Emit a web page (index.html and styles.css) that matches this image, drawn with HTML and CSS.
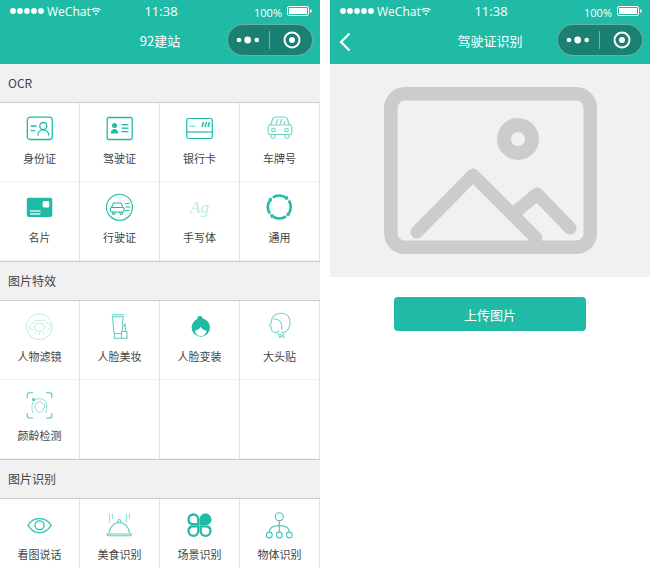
FILE: index.html
```html
<!DOCTYPE html>
<html lang="zh-CN">
<head>
<meta charset="UTF-8">
<title>92建站</title>
<link rel="stylesheet" href="styles.css">
</head>
<body>

<div class="phone">
    <div class="header">
        <div class="status">
            <div class="status-left">
                <svg class="signal" width="36" height="8" viewBox="0 0 36 8"><g fill="#fff"><circle cx="3" cy="4" r="2.9"/><circle cx="10" cy="4" r="2.9"/><circle cx="17" cy="4" r="2.9"/><circle cx="24" cy="4" r="2.9"/><circle cx="31" cy="4" r="2.9"/></g></svg>
                <span class="carrier">WeChat</span>
                <svg class="wifi" width="10" height="9" viewBox="0 0 11 9"><g fill="none" stroke="#fff" stroke-width="1.4"><path d="M.5 3C3.3.5 7.7.5 10.5 3"/><path d="M2.3 5C4 3.5 7 3.5 8.7 5"/></g><path d="M5.5 9 3.9 6.8C4.8 6.2 6.2 6.2 7.1 6.8z" fill="#fff"/></svg>
            </div>
            <span class="time">11:38</span>
            <div class="status-right">
                <span class="percent">100%</span>
                <svg width="25" height="10" viewBox="0 0 25 10"><rect x=".5" y=".5" width="21" height="9" rx="1.5" fill="none" stroke="#fff"/><rect x="2" y="2" width="18" height="6" fill="#fff"/><rect x="23" y="3.5" width="1.5" height="3" fill="#fff"/></svg>
            </div>
        </div>
        <div class="nav">
            <div></div>
            <div class="nav-title">92建站</div>
            <div class="capsule">
                <svg width="84" height="30" viewBox="0 0 84 30"><g fill="#fff"><circle cx="11" cy="15" r="2.3"/><circle cx="19.7" cy="15" r="3.4"/><circle cx="28.7" cy="15" r="2.3"/></g><path d="M41.5 6v18" stroke="#fff" stroke-opacity=".4"/><circle cx="64" cy="15" r="7.5" fill="none" stroke="#fff" stroke-width="2"/><circle cx="64" cy="15" r="3" fill="#fff"/></svg>
            </div>
        </div>
    </div>

    <div class="section-title">OCR</div>
    <div class="grid">
        <div class="cell">
            <svg class="icon" viewBox="0 0 30 30"><g fill="none" stroke="#1fbba6" stroke-width="1.3"><rect x="2.3" y="4.2" width="25" height="22.3" rx="3"/><circle cx="18.3" cy="13" r="3.5"/><path d="M12.8 22.5c.3-7.5 10.7-7.5 11 0"/><path d="M5.7 13h6M5.7 17.7h4.5"/></g></svg>
            <span class="label">身份证</span>
        </div>
        <div class="cell">
            <svg class="icon" viewBox="0 0 30 30"><rect x="2.2" y="4.5" width="25" height="22" rx="1.5" fill="none" stroke="#1fbba6" stroke-width="1.3"/><g fill="#1fbba6"><circle cx="9.5" cy="12.5" r="2.5"/><path d="M5.8 20.5c0-6 7.4-6 7.4 0z"/><rect x="16.5" y="11" width="7" height="1.3"/><rect x="16.5" y="14.5" width="7" height="1.3"/><rect x="16.5" y="18" width="7" height="1.3"/></g></svg>
            <span class="label">驾驶证</span>
        </div>
        <div class="cell">
            <svg class="icon" viewBox="0 0 30 30"><rect x="1.8" y="5.5" width="25.5" height="20" rx="1.5" fill="none" stroke="#1fbba6" stroke-width="1.2"/><path d="M2 19h25" stroke="#1fbba6" stroke-width="1.2"/><path d="M4.5 13.2h5.500" stroke="#1fbba6" stroke-dasharray="1.5 .6"/><path d="M17 14l1.5-5M20 14l1.5-5M23 14l1.5-5" stroke="#1fbba6" stroke-width="1.5"/></svg>
            <span class="label">银行卡</span>
        </div>
        <div class="cell">
            <svg class="icon" viewBox="0 0 30 30"><g fill="none" stroke="#6fd3c5" stroke-width="1.1"><path d="M5.5 12.5 7.5 6.5C8 5 9 4 10.7 4h8.600c1.700 0 2.700 1 3.200 2.500l2 6"/><path d="M5 12h20c1 0 1.800.8 1.800 1.800v6c0 1-.8 1.700-1.800 1.700H5c-1 0-1.800-.7-1.800-1.700v-6C3.200 12.800 4 12 5 12z"/><circle cx="8.5" cy="17" r="1.8"/><circle cx="21.5" cy="17" r="1.8"/><path d="M6 21.5v2c0 2.400 4 2.400 4 0v-2M20 21.5v2c0 2.400 4 2.400 4 0v-2"/><path d="M11 11l2-5M15 11l2-5M19 11l1-3"/></g></svg>
            <span class="label">车牌号</span>
        </div>
        <div class="cell">
            <svg class="icon" viewBox="0 0 30 30"><rect x="1.8" y="5.8" width="25.5" height="19.2" rx="2" fill="#1fbba6"/><rect x="17.7" y="9" width="6.6" height="6.4" rx="1.5" fill="#fff"/><path d="M5 19h10.5M5 22h10.5" stroke="#d5f2ed" stroke-width="1.3"/></svg>
            <span class="label">名片</span>
        </div>
        <div class="cell">
            <svg class="icon" viewBox="0 0 30 30"><g fill="none" stroke="#1fbba6" stroke-width="1.1"><circle cx="14.5" cy="15.3" r="13"/><path d="M6.5 15.5 8 12c.3-.7.8-1 1.500-1h5.500c.7 0 1.200.3 1.500 1l1.500 3.500"/><rect x="5.5" y="15.5" width="13.5" height="4.5" rx="1.2"/><path d="M7.5 20v1.500c0 1.200 2.500 1.200 2.500 0V20M15 20v1.500c0 1.200 2.500 1.200 2.500 0V20"/><path d="M20 11.5h4.500M20.500 15h5M20 18.500h4.500"/></g></svg>
            <span class="label">行驶证</span>
        </div>
        <div class="cell">
            <svg class="icon" viewBox="0 0 30 30"><text x="5" y="21" class="script">Ag</text></svg>
            <span class="label">手写体</span>
        </div>
        <div class="cell">
            <svg class="icon" viewBox="0 0 30 30"><circle cx="14.3" cy="15" r="11.5" fill="none" stroke="#1fbba6" stroke-width="2.6" stroke-dasharray="14.5 3.565" stroke-dashoffset="7.25"/><g fill="#1fbba6"><path d="M23.5 7.5 22.6 3.6 19.5 7.800z"/><path d="M23.5 7.5 22.6 3.6 19.5 7.800z" transform="rotate(90 14.3 15)"/><path d="M23.5 7.5 22.6 3.6 19.5 7.800z" transform="rotate(180 14.3 15)"/><path d="M23.5 7.5 22.6 3.6 19.5 7.800z" transform="rotate(270 14.3 15)"/></g></svg>
            <span class="label">通用</span>
        </div>
    </div>

    <div class="section-title">图片特效</div>
    <div class="grid">
        <div class="cell">
            <svg class="icon" viewBox="0 0 30 30"><g fill="none" stroke="#bfeae3" stroke-width="1"><circle cx="14.3" cy="15.7" r="13"/><path d="M8 19c-2.500 0-4-1.500-3.700-3.500.2-1.500 1.700-2.500 3-2.300C8 10.500 11 9 14 9.800c3-1.200 6-.2 7.500 2.500 2.200-.3 4 1 4 3 0 2-1.500 3.500-3.500 3.500"/><path d="M9 16c1-3 2.500-4 5.500-3.500 3-.5 5 1 5.500 3.500-.5 3-2.500 4.500-5.500 4.500S9.500 19 9 16z"/><path d="M10 21.500l1 2M14.500 21.500v2.500M19 21.500l-1 2"/></g></svg>
            <span class="label">人物滤镜</span>
        </div>
        <div class="cell">
            <svg class="icon" viewBox="0 0 30 30"><g fill="none" stroke="#5fcfbf" stroke-width="1.1"><path d="M6.8 3.8h12M6.8 5.8h12"/><path d="M7.5 5.8l2.200 21.400h7"/><path d="M18.2 5.8l-1 8"/><path d="M16.5 20.5h5.500v6.800h-5.500z"/><path d="M10 22.500h6.500"/><path d="M17.5 20.5v-5l2.500-2.500.7 7.500"/></g></svg>
            <span class="label">人脸美妆</span>
        </div>
        <div class="cell">
            <svg class="icon" viewBox="0 0 30 30"><circle cx="15" cy="7.5" r="2.6" fill="#1fbba6"/><circle cx="15.8" cy="16.5" r="9.2" fill="#1fbba6"/><path d="M10 19.500c2 0 4.200-1.200 5.700-3.500 1.300 2.300 3.500 3.500 5.700 3.500 0 3.300-2.500 5.700-5.700 5.700s-5.700-2.400-5.700-5.700z" fill="#fff"/></svg>
            <span class="label">人脸变装</span>
        </div>
        <div class="cell">
            <svg class="icon" viewBox="0 0 30 30"><g fill="none" stroke="#76d7c9" stroke-width="1.1"><path d="M7 7.5C9 3 14 1.500 18.500 2.500c4.500 1 6.500 5 6.500 9 0 4-1.500 7-4 9-1.500 1-3 1.200-4.500 1"/><path d="M7 7.5c-.5 1.500-.8 3-.8 4.500L4.500 15l1.800 1c0 3 1 5 3 5.500 2 .3 3.500-.5 4.500-1.500"/><path d="M8.5 8c2.500 0 6 1 7.500 3.500 1 2 1 5 .5 7.500"/><path d="M13 22l2 4.500 4.500-4"/><path d="M15 23l4.500 4"/></g></svg>
            <span class="label">大头贴</span>
        </div>
        <div class="cell">
            <svg class="icon" viewBox="0 0 30 30"><g fill="none" stroke="#4cc9b7" stroke-width="1.1"><path d="M2.2 8V5c0-1.300 1-2.300 2.300-2.300H8M21 2.700h3.500c1.300 0 2.300 1 2.300 2.300v3M26.800 23v3c0 1.300-1 2-2.300 2H21M8 28H4.500c-1.300 0-2.300-.7-2.300-2v-3"/></g><g fill="none" stroke="#8ce0d3" stroke-width="1"><path d="M8 23c-1-3-1.500-6-.7-9 .8-3 3.500-5.500 7-5.500 4 0 6.500 2.500 7.200 5.500.6 3 .2 6-.8 9"/><path d="M10 14c2-.5 4-1.500 5-3 1 2 3 3 4.500 3.500 0 3.500-1 7-5 8-3-.5-4.800-4-4.500-8.500z"/></g><circle cx="8.5" cy="9.5" r="1.5" fill="#4cc9b7"/></svg>
            <span class="label">颜龄检测</span>
        </div>
        <div class="cell"></div>
        <div class="cell"></div>
        <div class="cell"></div>
    </div>

    <div class="section-title">图片识别</div>
    <div class="grid">
        <div class="cell">
            <svg class="icon" viewBox="0 0 30 30"><g fill="none" stroke="#45c7b5" stroke-width="1.5"><path d="M3 16.300C6 11.500 10 9.500 14.500 9.500S23 11.500 26.200 16.300C23 21 19 23.800 14.500 23.800S6 21 3 16.300z"/><circle cx="14.5" cy="16.3" r="4.5"/></g></svg>
            <span class="label">看图说话</span>
        </div>
        <div class="cell">
            <svg class="icon" viewBox="0 0 30 30"><g fill="none" stroke="#5fcfbf" stroke-width="1.1"><path d="M4 24.500c.5-6.500 5-11 10.300-11s9.800 4.500 10.300 11"/><path d="M2 25h24.500c0 1-.5 1.700-1.500 1.700H3.500C2.500 26.700 2 26 2 25z"/><circle cx="14.3" cy="12" r="1.5"/></g><g fill="none" stroke="#8ce0d3" stroke-width="1.1"><path d="M4.500 4.500c-1.500 2 1.500 3.500 0 5.500s1 2.500 0 3.500M7.500 4.500c-1.500 2 1.500 3.500 0 5.500M21.500 4.500c-1.500 2 1.500 3.500 0 5.500s1 2.500 0 3.500M24.500 4.500c-1.500 2 1.500 3.500 0 5.500"/></g></svg>
            <span class="label">美食识别</span>
        </div>
        <div class="cell">
            <svg class="icon" viewBox="0 0 30 30"><g fill="none" stroke="#1fbba6" stroke-width="2.3"><path d="M13.300 15.100H8c-3 0-4.500-2-4.500-4.700s2.200-4.900 4.900-4.900 4.900 2.200 4.900 4.900z"/><path d="M13.300 17.300H8c-3 0-4.500 2-4.500 4.700s2.200 4.900 4.900 4.900 4.900-2.200 4.900-4.900z"/><path d="M15.700 17.300H21c3 0 4.500 2 4.500 4.700s-2.200 4.900-4.900 4.900-4.900-2.200-4.900-4.900z"/></g><path d="M14.500 16.100V10.400c0-3.300 2.700-6 6-6s6 2.700 6 6-2.700 5.700-6 5.700z" fill="#1fbba6"/></svg>
            <span class="label">场景识别</span>
        </div>
        <div class="cell">
            <svg class="icon" viewBox="0 0 30 30"><g fill="none" stroke="#45c7b5" stroke-width="1.1"><circle cx="14.3" cy="7.7" r="4"/><circle cx="4.3" cy="26" r="2.9"/><circle cx="14.3" cy="26" r="2.9"/><circle cx="24.3" cy="26" r="2.9"/><path d="M14.300 11.700v11.400"/><path d="M4.300 23.100c0-4.500 3-6.500 10-6.500s10 2 10 6.500"/></g></svg>
            <span class="label">物体识别</span>
        </div>
    </div>
</div>

<div class="phone">
    <div class="header">
        <div class="status">
            <div class="status-left">
                <svg class="signal" width="36" height="8" viewBox="0 0 36 8"><g fill="#fff"><circle cx="3" cy="4" r="2.9"/><circle cx="10" cy="4" r="2.9"/><circle cx="17" cy="4" r="2.9"/><circle cx="24" cy="4" r="2.9"/><circle cx="31" cy="4" r="2.9"/></g></svg>
                <span class="carrier">WeChat</span>
                <svg class="wifi" width="10" height="9" viewBox="0 0 11 9"><g fill="none" stroke="#fff" stroke-width="1.4"><path d="M.5 3C3.3.5 7.7.5 10.5 3"/><path d="M2.3 5C4 3.5 7 3.5 8.7 5"/></g><path d="M5.5 9 3.9 6.8C4.8 6.2 6.2 6.2 7.1 6.8z" fill="#fff"/></svg>
            </div>
            <span class="time">11:38</span>
            <div class="status-right">
                <span class="percent">100%</span>
                <svg width="25" height="10" viewBox="0 0 25 10"><rect x=".5" y=".5" width="21" height="9" rx="1.5" fill="none" stroke="#fff"/><rect x="2" y="2" width="18" height="6" fill="#fff"/><rect x="23" y="3.5" width="1.5" height="3" fill="#fff"/></svg>
            </div>
        </div>
        <div class="nav">
            <svg class="back" width="14" height="20" viewBox="0 0 14 20"><path d="M11.5 1.5 3 10l8.500 8.500" fill="none" stroke="#fff" stroke-width="2.2"/></svg>
            <div class="nav-title">驾驶证识别</div>
            <div class="capsule">
                <svg width="84" height="30" viewBox="0 0 84 30"><g fill="#fff"><circle cx="11" cy="15" r="2.3"/><circle cx="19.7" cy="15" r="3.4"/><circle cx="28.7" cy="15" r="2.3"/></g><path d="M41.5 6v18" stroke="#fff" stroke-opacity=".4"/><circle cx="64" cy="15" r="7.5" fill="none" stroke="#fff" stroke-width="2"/><circle cx="64" cy="15" r="3" fill="#fff"/></svg>
            </div>
        </div>
    </div>

    <div class="preview">
        <svg width="213" height="167" viewBox="0 0 213 167"><g fill="none" stroke="#ccc" stroke-linecap="round" stroke-linejoin="round"><rect x="6.8" y="6.8" width="199.5" height="153.5" rx="14" stroke-width="13.5"/><circle cx="134" cy="52" r="14" stroke-width="14"/><path d="M33 145 89 88l63 63" stroke-width="13"/><path d="M134 123l19-16 33 34" stroke-width="13"/></g></svg>
    </div>
    <div class="actions">
        <button class="upload">上传图片</button>
    </div>
</div>

</body>
</html>
```

FILE: styles.css
```css
body {
    margin: 0;
    width: 650px;
    height: 568px;
    overflow: hidden;
    display: flex;
    gap: 10px;
    background-color: #fff;
    font-family: "Noto Sans CJK SC", "Open Sans", sans-serif;
    color: #444;
}
.phone {
    width: 320px;
    height: 568px;
    overflow: hidden;
    flex: none;
}
.header {
    height: 64px;
    background-color: #1fbba6;
    color: #fff;
}
.status {
    height: 22px;
    padding: 0 8px 0 10px;
    display: grid;
    grid-template-columns: 1fr auto 1fr;
    align-items: center;
    font-family: "Open Sans", sans-serif;
}
.status-left {
    display: flex;
    align-items: center;
}
.carrier {
    font-size: 12px;
    margin-left: 1px;
}
.time {
    font-size: 13px;
}
.status-right {
    display: flex;
    align-items: center;
    justify-content: flex-end;
    gap: 5px;
}
.percent {
    font-size: 11px;
    position: relative;
    top: 1px;
}
.nav {
    height: 42px;
    padding: 2px 7px 0;
    box-sizing: border-box;
    display: grid;
    grid-template-columns: 1fr auto 1fr;
    align-items: start;
}
.nav-title {
    font-size: 13px;
    line-height: 34px;
}
.capsule {
    justify-self: end;
    width: 84px;
    height: 30px;
    border: 1px solid rgba(255, 255, 255, 0.35);
    border-radius: 16px;
    background-color: #1a8172;
}
.capsule svg {
    display: block;
}
.back {
    margin: 8px 0 0 1px;
}
.section-title {
    height: 38px;
    line-height: 38px;
    padding-left: 8px;
    font-size: 12px;
    background-color: #f1f1f1;
}
.grid {
    display: grid;
    grid-template-columns: repeat(4, 80px);
    grid-auto-rows: 79px;
    border-top: 1px solid #ccc;
    border-bottom: 1px solid #ccc;
}
.cell {
    box-sizing: border-box;
    padding-top: 10px;
    display: flex;
    flex-direction: column;
    align-items: center;
    border-right: 1px solid #e2e2e2;
    border-bottom: 1px solid #f1f1f1;
}
.icon {
    width: 30px;
    height: 30px;
    flex: none;
}
.label {
    margin-top: 7px;
    font-size: 11px;
    line-height: 16px;
}
.script {
    font-family: "Liberation Serif", serif;
    font-style: italic;
    font-size: 17px;
    fill: #bdeae2;
}
.preview {
    height: 213px;
    background-color: #f1f1f1;
    display: flex;
    align-items: center;
    justify-content: center;
}
.actions {
    display: flex;
    justify-content: center;
    padding-top: 20px;
}
.upload {
    width: 192px;
    height: 34px;
    border: none;
    border-radius: 4px;
    background-color: #1fbba6;
    color: #fff;
    font-family: inherit;
    font-size: 13px;
}
```
